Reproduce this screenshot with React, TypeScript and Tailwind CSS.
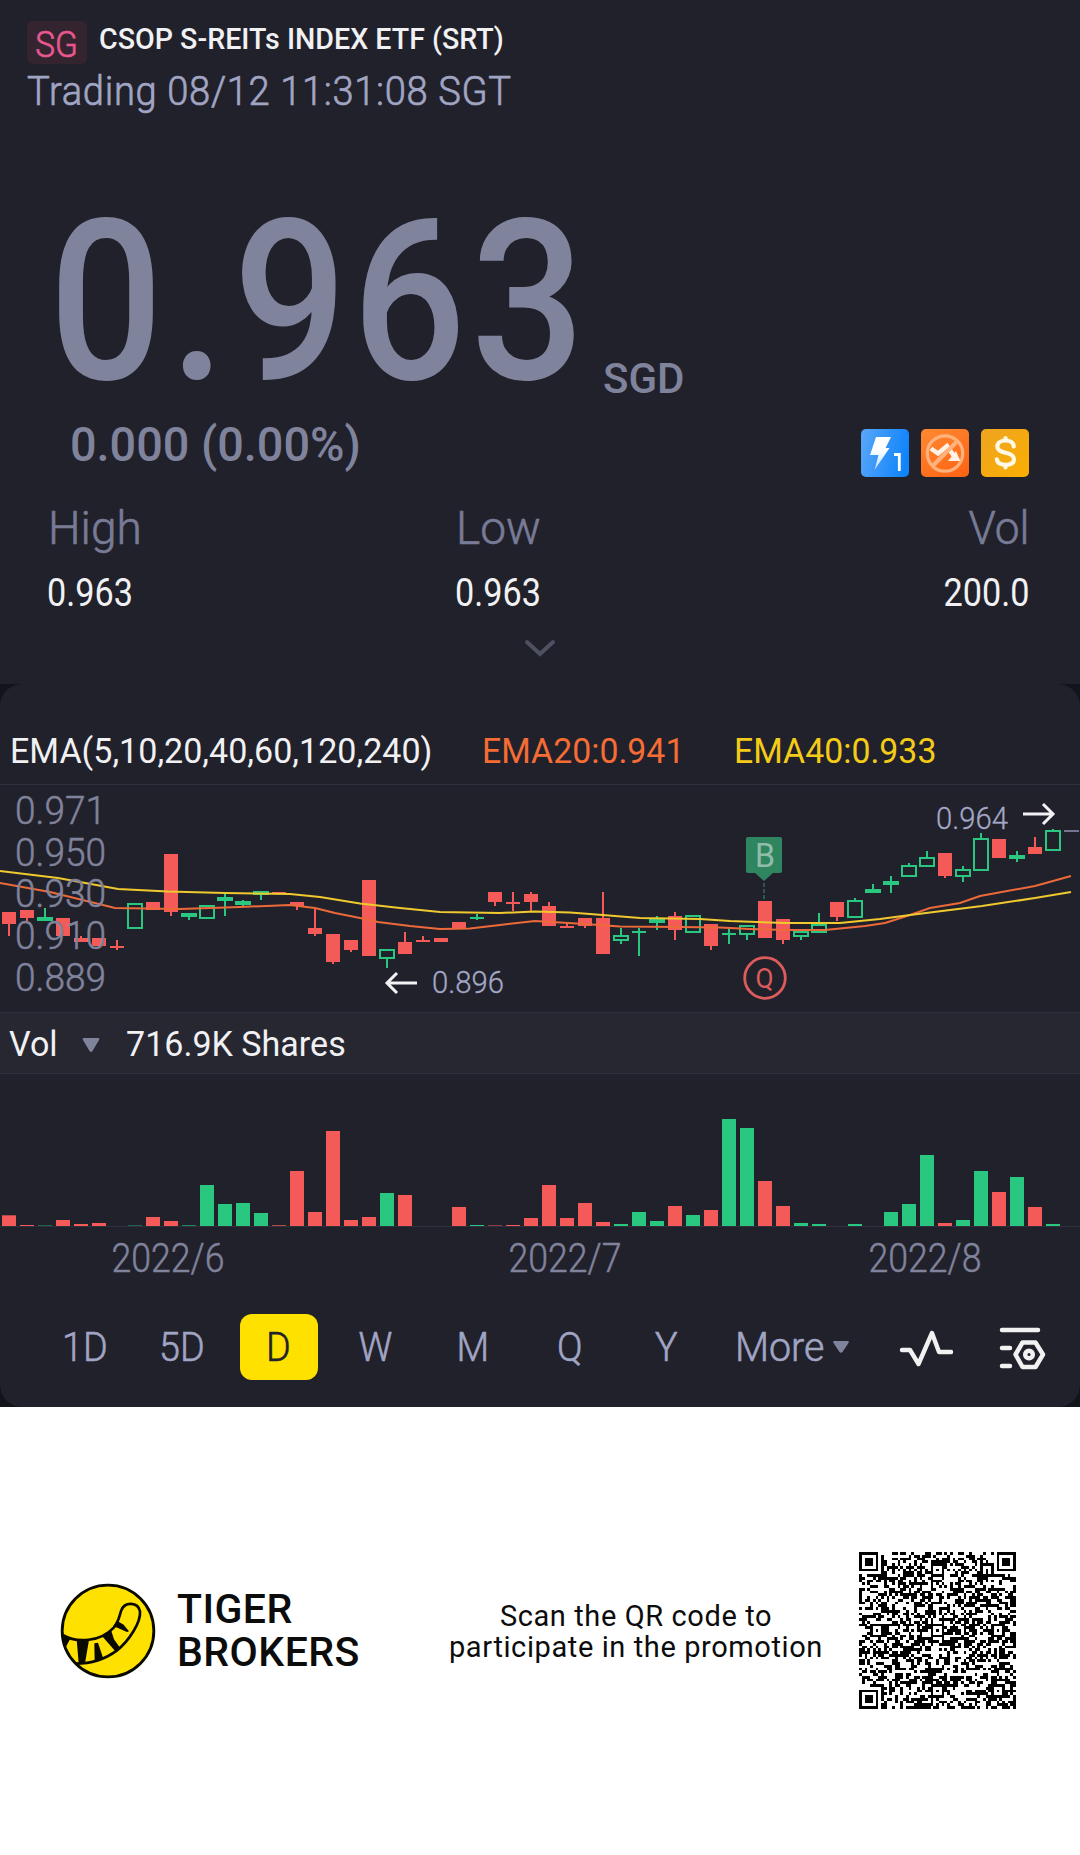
import React from 'react'

const RED = '#f45b58'
const GREEN = '#29c77f'
const STEP = 18

type Color = 'r' | 'g'
// color, body top, body bottom, wick high, wick low
type Candle = [Color, number, number, number, number]

const candles: Candle[] = [
  ['r', 132, 144, 132, 156],
  ['r', 130, 138, 130, 141],
  ['g', 137, 141, 128, 141],
  ['r', 138, 156, 138, 156],
  ['r', 158, 162, 156, 162],
  ['r', 158, 166, 158, 166],
  ['r', 166, 168, 160, 170],
  ['g', 123, 149, 123, 149],
  ['r', 122, 130, 122, 130],
  ['r', 74, 132, 74, 136],
  ['g', 133, 137, 133, 140],
  ['g', 125, 139, 125, 139],
  ['g', 117, 121, 114, 136],
  ['g', 121, 125, 120, 126],
  ['g', 111, 115, 111, 120],
  ['r', 112, 114, 112, 114],
  ['r', 122, 126, 122, 130],
  ['r', 148, 154, 128, 156],
  ['r', 154, 182, 154, 184],
  ['r', 160, 170, 160, 172],
  ['r', 100, 176, 100, 176],
  ['g', 169, 179, 169, 188],
  ['r', 162, 174, 152, 174],
  ['r', 160, 162, 156, 162],
  ['r', 158, 162, 158, 162],
  ['r', 142, 149, 142, 149],
  ['g', 137, 139, 134, 140],
  ['r', 112, 122, 112, 126],
  ['r', 122, 124, 112, 131],
  ['r', 114, 122, 112, 131],
  ['r', 126, 146, 122, 146],
  ['r', 146, 148, 143, 148],
  ['r', 138, 146, 138, 148],
  ['r', 138, 174, 112, 174],
  ['g', 155, 161, 148, 164],
  ['g', 151, 153, 148, 176],
  ['g', 139, 143, 136, 150],
  ['r', 136, 150, 132, 160],
  ['g', 135, 153, 135, 153],
  ['r', 144, 166, 144, 170],
  ['g', 153, 155, 149, 164],
  ['g', 145, 155, 145, 160],
  ['r', 121, 158, 121, 158],
  ['r', 139, 160, 139, 164],
  ['g', 151, 157, 151, 160],
  ['g', 144, 153, 133, 153],
  ['r', 122, 137, 122, 141],
  ['g', 120, 138, 118, 138],
  ['g', 109, 113, 104, 113],
  ['g', 101, 105, 96, 113],
  ['g', 85, 97, 83, 97],
  ['g', 77, 87, 71, 87],
  ['r', 73, 96, 73, 98],
  ['g', 89, 97, 86, 102],
  ['g', 58, 91, 53, 91],
  ['r', 59, 78, 59, 78],
  ['g', 75, 79, 71, 82],
  ['r', 67, 74, 57, 74],
  ['g', 50, 71, 49, 71],
]

const volumes: number[] = [
  10.7, 1, 0.4, 6, 2, 3, 0, 0.4, 9, 5, 0.6, 41, 22, 23, 13, 0.7, 55, 14, 95, 6,
  9, 33, 31, 0, 0, 19, 1, 0.5, 1, 8, 41, 8, 23, 4, 2, 14, 5, 20, 11, 16, 107,
  98, 45, 20, 3, 2, 0, 2, 0, 14, 22, 71, 3, 6, 55, 34, 49, 19, 2,
]

const volumeColors =
  'rrgrrrggrrgggggrrrrrrgrrrrgrrrrrrrggg' + 'rgrggrrggggggggrggrgrg'

const EMA40 =
  '0,91 58,98 118,109 168,111.5 225,113 290,114 320,117 360,123.5 400,128 440,132 500,133 535,131.5 570,132.5 590,134 640,138 700,139 730,141 785,143 840,143 880,139 910,135 982,126 1035,118 1071,112'
const EMA20 =
  '0,103 50,112 115,128 180,129 240,127 290,125 315,128 335,133 360,138 378,142 410,146 440,149 470,148.5 500,145 535,141 585,144 620,146.5 680,147 720,147.5 750,149 785,150 825,150 865,146 885,143 910,135 930,128 960,123 980,116 1035,106 1071,96'

const axis = [
  { label: '0.971', y: 44 },
  { label: '0.950', y: 86 },
  { label: '0.930', y: 127 },
  { label: '0.910', y: 169 },
  { label: '0.889', y: 211 },
]

const months = [
  { label: '2022/6', x: 111.5 },
  { label: '2022/7', x: 508.5 },
  { label: '2022/8', x: 868.5 },
]

const periods = ['1D', '5D', 'D', 'W', 'M', 'Q', 'Y']

function CandleShape({ candle, index }: { candle: Candle; index: number }) {
  const [color, top, bottom, high, low] = candle
  const x = 9 + index * STEP
  const h = bottom - top
  if (color === 'g' && h > 4) {
    return (
      <g stroke={GREEN} strokeWidth="2" fill="none">
        <rect x={x - 7} y={top + 1} width="14" height={h - 2} />
        {high < top && <path d={`M${x} ${high}V${top}`} />}
        {low > bottom && <path d={`M${x} ${bottom}V${low}`} />}
      </g>
    )
  }
  const half = color === 'g' && h > 2 ? 8 : 7
  return (
    <g fill={color === 'g' ? GREEN : RED}>
      <rect x={x - half} y={top} width={half * 2} height={h} />
      <rect x={x - 1} y={high} width="2" height={low - high} />
    </g>
  )
}

function CandleChart() {
  return (
    <svg
      className="block h-[232px] w-full"
      viewBox="0 0 1080 232"
      fontFamily="Roboto, sans-serif">
      <rect y="4" width="1080" height="1" fill="#30303c" />
      {candles.map((c, i) => (
        <CandleShape key={i} candle={c} index={i} />
      ))}
      <rect x="1064" y="50" width="15" height="2" fill="#73768f" />
      <polyline points={EMA20} fill="none" stroke="#ec6a3a" strokeWidth="2" />
      <polyline points={EMA40} fill="none" stroke="#efc92e" strokeWidth="2" />
      <g fontSize="39" fontWeight="300" fill="#80839b" stroke="#80839b" strokeWidth="0.5">
        {axis.map((a) => (
          <text
            key={a.label}
            x="15"
            y={a.y}
            textLength="91"
            lengthAdjust="spacingAndGlyphs">
            {a.label}
          </text>
        ))}
      </g>

      <g fill="none" stroke="#f2f2f4" strokeWidth="3">
        <path d="M417 203H388M397 193L387 203L397 213" />
        <path d="M1023 34H1052M1043 24L1053 34L1043 44" />
      </g>
      <g fontSize="31.5" fontWeight="300" fill="#a4a8c6" stroke="#a4a8c6" strokeWidth="0.3">
        <text x="432" y="213" textLength="72" lengthAdjust="spacingAndGlyphs">
          0.896
        </text>
        <text x="936" y="49" textLength="72" lengthAdjust="spacingAndGlyphs">
          0.964
        </text>
      </g>

      <path
        d="M748 57H780Q782 57 782 59V91Q782 93 780 93H773L764 101L755 93H748Q746 93 746 91V59Q746 57 748 57Z"
        fill="#2e855f"
      />
      <text x="755" y="87" fontSize="33" fill="#91bca9" textLength="20" lengthAdjust="spacingAndGlyphs">
        B
      </text>
      <path d="M764 103V120" stroke="#2e6a50" strokeWidth="1.6" strokeDasharray="4 2" />
      <circle cx="765" cy="198" r="20.3" fill="none" stroke="#dc5c5c" strokeWidth="2.8" />
      <text x="755.5" y="207.5" fontSize="27" fill="#dc5c5c" textLength="18" lengthAdjust="spacingAndGlyphs">
        Q
      </text>
    </svg>
  )
}

function VolumeChart() {
  return (
    <svg
      className="block h-[216px] w-full"
      viewBox="0 0 1080 216"
      fontFamily="Roboto, sans-serif">
      {volumes.map((v, i) => (
        <rect
          key={i}
          x={2 + i * STEP}
          y={152 - v}
          width="14"
          height={v}
          fill={volumeColors[i] === 'g' ? GREEN : RED}
        />
      ))}
      <rect y="152" width="1080" height="1" fill="#2f303b" />
      <g fontSize="40" fontWeight="300" fill="#80839b" stroke="#80839b" strokeWidth="0.5">
        {months.map((m) => (
          <text
            key={m.label}
            x={m.x}
            y="197.5"
            textLength="113"
            lengthAdjust="spacingAndGlyphs">
            {m.label}
          </text>
        ))}
      </g>
    </svg>
  )
}

function FlashIcon() {
  return (
    <svg className="size-12" viewBox="0 0 48 48">
      <defs>
        <linearGradient id="flash" x1="0" y1="0.3" x2="1" y2="0.5">
          <stop offset="0" stopColor="#55a5f8" />
          <stop offset="1" stopColor="#0f83fb" />
        </linearGradient>
        <linearGradient id="bolt" x1="0" y1="0" x2="0" y2="1">
          <stop offset="0.4" stopColor="#fff" />
          <stop offset="1" stopColor="#b9dbff" />
        </linearGradient>
      </defs>
      <rect width="48" height="48" rx="5" fill="url(#flash)" />
      <path d="M15 8H30L24.5 19H28.5L13.5 41L17.5 26H9Z" fill="url(#bolt)" />
      <path d="M33 25.5H38.3V42" fill="none" stroke="#fff" strokeWidth="2.8" />
    </svg>
  )
}

function NoShortIcon() {
  return (
    <svg className="size-12" viewBox="0 0 48 48">
      <defs>
        <linearGradient id="short" x1="0.2" y1="0" x2="0.8" y2="1">
          <stop offset="0" stopColor="#ff8730" />
          <stop offset="1" stopColor="#ff6415" />
        </linearGradient>
      </defs>
      <rect width="48" height="48" rx="5" fill="url(#short)" />
      <path d="M10 19.5L17 24.5L26 17L33 27" fill="none" stroke="#fff3e8" strokeWidth="4.5" />
      <path d="M35 22L39.5 32H27Z" fill="#fff3e8" />
      <g fill="none" stroke="#ffb27c" strokeWidth="3.2">
        <circle cx="24" cy="24.5" r="17.7" />
        <path d="M11.5 37L36.5 12" strokeWidth="4" />
      </g>
    </svg>
  )
}

function DollarIcon() {
  return (
    <svg className="size-12" viewBox="0 0 48 48">
      <defs>
        <linearGradient id="dollar" x1="0" y1="0" x2="1" y2="1">
          <stop offset="0" stopColor="#eda421" />
          <stop offset="1" stopColor="#fbae02" />
        </linearGradient>
      </defs>
      <rect width="48" height="48" rx="5" fill="url(#dollar)" />
      <g fill="none" stroke="#fff8e4" strokeWidth="4.2" strokeLinecap="round">
        <path d="M32.8 17.5C32.5 13.5 29 11.5 24.5 11.5C20 11.5 16.3 13.8 16.3 17.6C16.3 21.5 20 22.8 24.5 23.8C29.5 24.9 33 26.5 33 30.3C33 34 29.5 35.8 24.5 35.8C19.8 35.8 16.3 34 15.8 30.3" />
        <path d="M24.5 9V11M24.5 37V38.5" />
      </g>
    </svg>
  )
}

function TigerLogo() {
  return (
    <svg className="size-[96px] shrink-0" viewBox="60 67 288 288">
      <circle cx="204" cy="211" r="137.5" fill="#ffe100" stroke="#0a0a00" strokeWidth="8.5" />
      <path
        d="M68 223C110 248 182 244 222 200C238 180 238 164 244 149C254 122 294 123 300 152C303 184 268 240 230 270C194 297 152 309 106 309"
        fill="none"
        stroke="#0a0a00"
        strokeWidth="8"
      />
      <g fill="#0a0a00">
        <path d="M66 220L92 232L74 266Z" />
        <path d="M110 236L147 238L135 308L116 308Z" />
        <path d="M163 248L174 246L190 294L164 302Z" />
        <path d="M186 226L213 208L222 236L242 264L228 274Z" />
        <path d="M220 196L231 180L251 192L267 212L261 214Z" />
      </g>
    </svg>
  )
}

const SIZE = 57

function drawFinder(grid: boolean[][], row: number, col: number) {
  for (let r = -1; r <= 7; r++) {
    for (let c = -1; c <= 7; c++) {
      if (!grid[row + r] || col + c < 0 || col + c >= SIZE) continue
      const ring = Math.max(Math.abs(r - 3), Math.abs(c - 3))
      grid[row + r][col + c] = ring === 3 || ring <= 1
    }
  }
}

function buildQr(): string {
  let seed = 20220812
  const next = () => {
    seed = (Math.imul(seed, 1664525) + 1013904223) >>> 0
    return seed / 4294967296
  }
  const grid = Array.from({ length: SIZE }, () =>
    Array.from({ length: SIZE }, () => next() < 0.48),
  )
  for (let i = 0; i < SIZE; i++) {
    grid[6][i] = i % 2 === 0
    grid[i][6] = i % 2 === 0
  }
  for (const r of [6, 28, 50]) {
    for (const c of [6, 28, 50]) {
      for (let y = -2; y <= 2; y++) {
        for (let x = -2; x <= 2; x++) {
          grid[r + y][c + x] = Math.max(Math.abs(x), Math.abs(y)) !== 1
        }
      }
    }
  }
  drawFinder(grid, 0, 0)
  drawFinder(grid, 0, SIZE - 7)
  drawFinder(grid, SIZE - 7, 0)
  return grid
    .flatMap((line, y) => line.map((on, x) => (on ? `M${x} ${y}h1v1h-1z` : '')))
    .join('')
}

const qrPath = buildQr()

function Header() {
  return (
    <header className="h-[684px] bg-[#21212b] pt-[21px]">
      <div className="flex h-[43px] items-center pl-[27px]">
        <div className="flex h-[43px] w-[60px] items-center justify-center rounded-md bg-[#33242f] pt-1">
          <span className="scale-x-[0.9] text-[37px] leading-none font-light text-[#e8588f] [-webkit-text-stroke:0.7px]">
            SG
          </span>
        </div>
        <h1 className="-mt-[5px] ml-[12px] origin-left scale-x-[0.97] text-[29.5px] leading-none font-medium whitespace-nowrap text-[#f1f1f3]">
          CSOP S-REITs INDEX ETF (SRT)
        </h1>
      </div>
      <div className="flex h-[54px] items-center pl-[27px]">
        <span className="origin-left scale-x-[0.93] text-[41px] leading-none font-light tracking-[0.7px] whitespace-nowrap text-[#a1a5c4] [-webkit-text-stroke:0.7px]">
          Trading 08/12 11:31:08 SGT
        </span>
      </div>

      <div className="mt-[69px] flex h-[229px] items-end pl-[49px] text-[#80839c]">
        <span className="mb-px w-[554px] origin-left scale-x-[0.893] text-[225px] leading-none font-medium tracking-[5.3px] whitespace-nowrap">
          0<span className="mr-[3px] ml-[2px]">.</span>963
        </span>
        <span className="mb-[16px] origin-left text-[42px] leading-none font-medium">SGD</span>
      </div>

      <div className="mt-[13px] flex h-12 justify-between pr-[51px] pl-[70px]">
        <span className="-mt-[9px] origin-left scale-x-[0.955] text-[49px] leading-none font-medium whitespace-nowrap text-[#80839c]">
          0.000 (0.00%)
        </span>
        <div className="flex gap-3">
          <FlashIcon />
          <NoShortIcon />
          <DollarIcon />
        </div>
      </div>

      <div className="mt-[28px] grid grid-cols-[408px_1fr_auto] gap-y-[23px] pr-[51px] pl-[47px] leading-none">
        <span className="pl-px text-[46px] font-light text-[#787b96] [-webkit-text-stroke:0.6px]">
          High
        </span>
        <span className="pl-px text-[46px] font-light text-[#787b96] [-webkit-text-stroke:0.6px]">
          Low
        </span>
        <span className="origin-right scale-x-[0.96] text-right text-[46px] font-light text-[#787b96] [-webkit-text-stroke:0.6px]">
          Vol
        </span>
        <span className="origin-left scale-x-[0.9] text-[38px] text-[#f1f1f3]">0.963</span>
        <span className="origin-left scale-x-[0.9] text-[38px] text-[#f1f1f3]">0.963</span>
        <span className="origin-right scale-x-[0.9] text-right text-[38px] text-[#f1f1f3]">
          200.0
        </span>
      </div>

      <svg className="mx-auto mt-[27px] h-[18px] w-[32px]" viewBox="0 0 32 18">
        <path
          d="M3 3L16 15L29 3"
          fill="none"
          stroke="#4e5162"
          strokeWidth="4"
          strokeLinecap="round"
        />
      </svg>
    </header>
  )
}

function PeriodTabs() {
  return (
    <div className="flex h-[117px] items-start pt-[24px] pl-[36px] text-[#a1a5c4]">
      {periods.map((p) => (
        <div key={p} className="flex h-[66px] w-[97px] items-center justify-center">
          <div
            className={
              p === 'D'
                ? 'flex h-[66px] w-[78px] items-center justify-center rounded-xl bg-[#ffe100] text-[#21212b]'
                : 'flex items-center justify-center'
            }>
            <span className="scale-x-[0.92] text-[41px] leading-none font-light [-webkit-text-stroke:0.6px]">
              {p}
            </span>
          </div>
        </div>
      ))}
      <div className="ml-[20px] flex h-[66px] w-[97px] items-center">
        <span className="origin-left scale-x-[0.96] text-[41px] leading-none font-light [-webkit-text-stroke:0.6px]">
          More
        </span>
      </div>
      <svg className="mt-[26px] h-[14px] w-[18px]" viewBox="0 0 18 14">
        <path d="M2 1H16Q17.5 1 16.5 3L10.5 12Q9 13.5 7.5 12L1.5 3Q0.5 1 2 1Z" fill="#80839c" />
      </svg>
      <svg
        className="mt-[13px] ml-[49px] h-[42px] w-[54px]"
        viewBox="0 0 54 42"
        fill="none"
        stroke="#f1f1f1"
        strokeWidth="4.4"
        strokeLinecap="round"
        strokeLinejoin="round">
        <path d="M3 23H11L19.5 37L33 6L40 25H52" />
      </svg>
      <svg
        className="mt-[11px] ml-[44px] h-[46px] w-[52px]"
        viewBox="0 0 52 46"
        fill="none"
        stroke="#f1f1f1"
        strokeWidth="4.5"
        strokeLinecap="round"
        strokeLinejoin="round">
        <path d="M5 5H41M5 23H13M5 41H13" />
        <path d="M25.5 17.5H38.5L46 29.5L38.5 42H25.5L18.5 29.5Z" />
        <circle cx="32" cy="29.5" r="3.8" />
      </svg>
    </div>
  )
}

function ChartPanel() {
  return (
    <section className="bg-[#13131c]">
      <div className="h-[723px] overflow-hidden rounded-[22px] bg-[#21212b]">
        <div className="flex h-[96px] pt-[50px] pl-[10px] text-[35px] leading-none whitespace-nowrap">
          <span className="w-[472px] origin-left scale-x-[0.973] text-[#f1f1f3]">
            EMA(5,10,20,40,60,120,240)
          </span>
          <span className="w-[252px] origin-left scale-x-[0.967] text-[#f56c35]">EMA20:0.941</span>
          <span className="origin-left scale-x-[0.967] text-[#f4cb18]">EMA40:0.933</span>
        </div>
        <CandleChart />
        <div className="flex h-[62px] items-center border-y border-[#30303c] bg-[#272732] pl-[9px] text-[35px] leading-none text-[#f1f1f3]">
          <span className="w-[73px] origin-left scale-x-[0.973] pt-[2px]">Vol</span>
          <svg className="mt-[3px] h-[16px] w-[18px]" viewBox="0 0 18 16">
            <path d="M2 1H16Q18 1 17 3L10.5 14Q9 16 7.5 14L1 3Q0 1 2 1Z" fill="#80839c" />
          </svg>
          <span className="ml-[26px] origin-left scale-x-[0.973] pt-[2px]">716.9K Shares</span>
        </div>
        <VolumeChart />
        <PeriodTabs />
      </div>
    </section>
  )
}

function Promotion() {
  return (
    <footer className="flex h-[448px] items-center bg-white pl-[60px] text-[#0c0c0c]">
      <TigerLogo />
      <div className="ml-[21px] w-[265px] text-[41px] leading-[43px] font-medium tracking-[0.45px]">
        <div>TIGER</div>
        <div>BROKERS</div>
      </div>
      <p className="w-[386px] pt-[2px] pl-[2px] text-center text-[29px] leading-[31px] tracking-[0.6px] whitespace-nowrap">
        Scan the QR code to
        <br />
        participate in the promotion
      </p>
      <svg
        className="mb-[2px] ml-[31px] size-[157px] shrink-0"
        viewBox="0 0 57 57"
        shapeRendering="crispEdges">
        <path d={qrPath} fill="#000" />
      </svg>
    </footer>
  )
}

export default function App() {
  return (
    <main className="h-[1855px] w-[1080px] overflow-hidden bg-white font-[Roboto,sans-serif]">
      <Header />
      <ChartPanel />
      <Promotion />
    </main>
  )
}
